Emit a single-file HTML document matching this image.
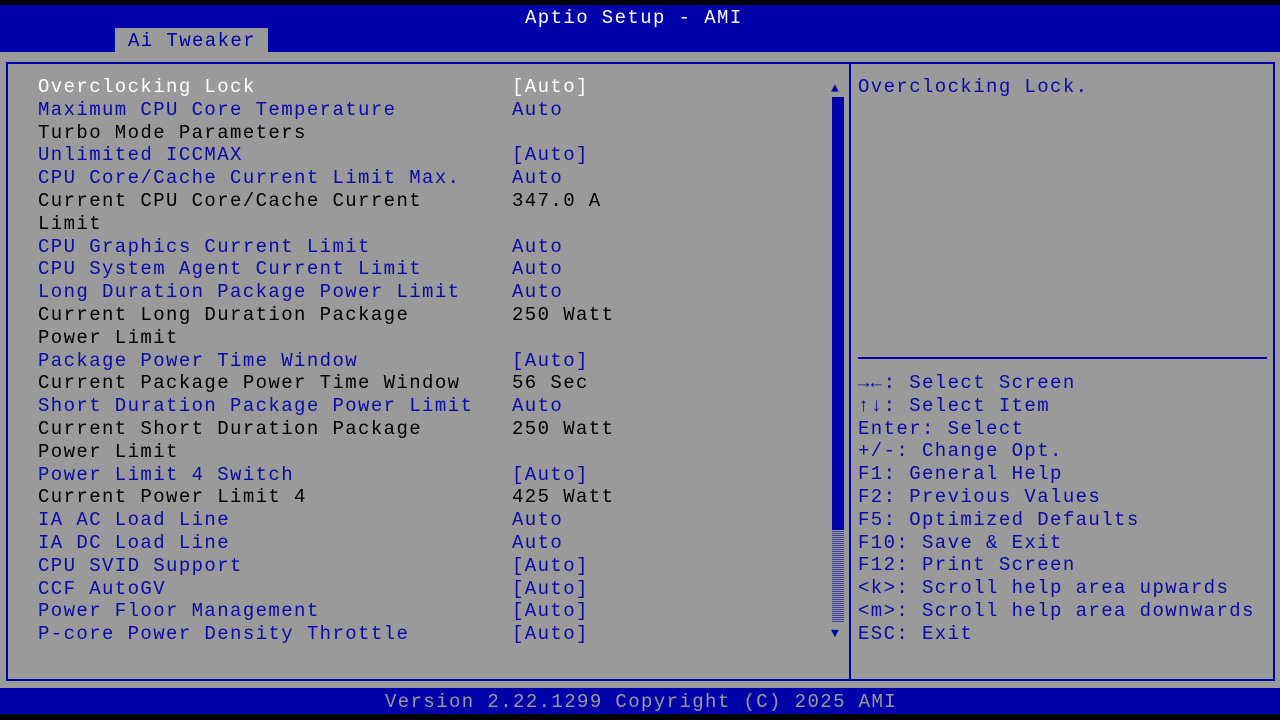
<!DOCTYPE html>
<html><head><style>
html,body{margin:0;padding:0;}
body{width:1280px;height:720px;background:#000;position:relative;overflow:hidden;font-family:"Liberation Mono","DejaVu Sans Mono",monospace;font-size:19px;letter-spacing:1.4px;}
.a{position:absolute;white-space:pre;line-height:22.8px;}
.top{position:absolute;left:0;top:5px;width:1280px;height:47px;background:#0000a8;}
.tab{position:absolute;left:115px;top:28px;width:153px;height:24px;background:#9a9a9a;color:#0000a8;}
.main{position:absolute;left:0;top:52px;width:1280px;height:636px;background:#9a9a9a;}
.foot{position:absolute;left:0;top:688px;width:1280px;height:26px;background:#0000a8;}
.b{color:#0a0aa8}.k{color:#000}.w{color:#fff}
</style></head><body>
<div class="top"></div>
<div class="a" style="left:525px;top:7px;color:#fff">Aptio Setup - AMI</div>
<div class="tab"></div>
<div class="a" style="left:128px;top:30px;color:#0000a8">Ai Tweaker</div>
<div class="main"></div>
<div style="position:absolute;left:6px;top:62px;width:1265px;height:615px;border:2px solid #0000a8;"></div>
<div style="position:absolute;left:849px;top:62px;width:2px;height:617px;background:#0000a8;"></div>
<div style="position:absolute;left:858px;top:357px;width:409px;height:2px;background:#0000a8;"></div>
<div style="position:absolute;left:832px;top:97px;width:12px;height:433px;background:#0000a8;"></div>
<div style="position:absolute;left:832px;top:530px;width:12px;height:92px;background:repeating-linear-gradient(0deg,#0000a8 0 1px,#9a9a9a 1px 2px);opacity:.6"></div>
<div class="a" style="left:831px;top:78px;color:#0000a8;font-size:13px;letter-spacing:0">▲</div>
<div class="a" style="left:831px;top:623px;color:#0000a8;font-size:13px;letter-spacing:0">▼</div>
<div class="a" style="left:38px;top:76px"><span class="w">Overclocking Lock</span>
<span class="b">Maximum CPU Core Temperature</span>
<span class="k">Turbo Mode Parameters</span>
<span class="b">Unlimited ICCMAX</span>
<span class="b">CPU Core/Cache Current Limit Max.</span>
<span class="k">Current CPU Core/Cache Current
Limit</span>
<span class="b">CPU Graphics Current Limit</span>
<span class="b">CPU System Agent Current Limit</span>
<span class="b">Long Duration Package Power Limit</span>
<span class="k">Current Long Duration Package
Power Limit</span>
<span class="b">Package Power Time Window</span>
<span class="k">Current Package Power Time Window</span>
<span class="b">Short Duration Package Power Limit</span>
<span class="k">Current Short Duration Package
Power Limit</span>
<span class="b">Power Limit 4 Switch</span>
<span class="k">Current Power Limit 4</span>
<span class="b">IA AC Load Line</span>
<span class="b">IA DC Load Line</span>
<span class="b">CPU SVID Support</span>
<span class="b">CCF AutoGV</span>
<span class="b">Power Floor Management</span>
<span class="b">P-core Power Density Throttle</span></div>
<div class="a" style="left:512px;top:76px"><span class="w">[Auto]</span>
<span class="b">Auto</span>

<span class="b">[Auto]</span>
<span class="b">Auto</span>
<span class="k">347.0 A</span>

<span class="b">Auto</span>
<span class="b">Auto</span>
<span class="b">Auto</span>
<span class="k">250 Watt</span>

<span class="b">[Auto]</span>
<span class="k">56 Sec</span>
<span class="b">Auto</span>
<span class="k">250 Watt</span>

<span class="b">[Auto]</span>
<span class="k">425 Watt</span>
<span class="b">Auto</span>
<span class="b">Auto</span>
<span class="b">[Auto]</span>
<span class="b">[Auto]</span>
<span class="b">[Auto]</span>
<span class="b">[Auto]</span></div>
<div class="a b" style="left:858px;top:76px">Overclocking Lock.</div>
<div class="a b" style="left:858px;top:372px">→←: Select Screen
↑↓: Select Item
Enter: Select
+/-: Change Opt.
F1: General Help
F2: Previous Values
F5: Optimized Defaults
F10: Save &amp; Exit
F12: Print Screen
&lt;k&gt;: Scroll help area upwards
&lt;m&gt;: Scroll help area downwards
ESC: Exit</div>
<div class="foot"></div>
<div class="a" style="left:385px;top:691px;color:#9a9a9a">Version 2.22.1299 Copyright (C) 2025 AMI</div>
</body></html>
